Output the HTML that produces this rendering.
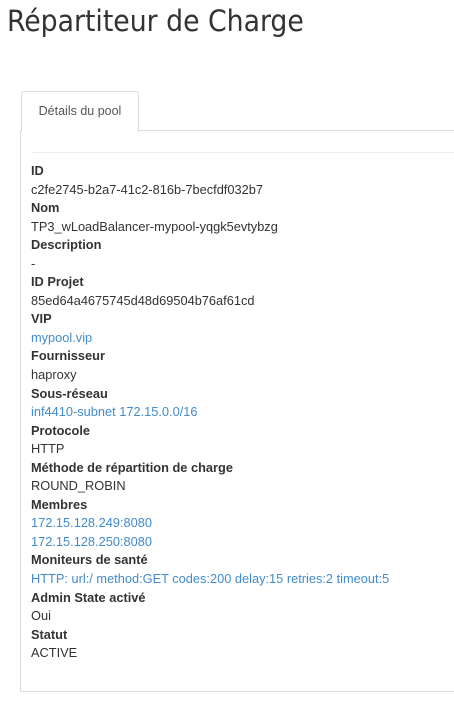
<!DOCTYPE html>
<html><head><meta charset="utf-8"><style>
body{margin:0;background:#fff;font-family:"Liberation Sans",sans-serif;font-size:12.8px;color:#333;width:454px;height:711px;overflow:hidden;position:relative}
h1{position:absolute;left:7px;top:4px;margin:0;font-weight:normal;font-size:29.7px;font-family:"DejaVu Sans Condensed","DejaVu Sans",sans-serif;color:#333}
.tab{position:absolute;left:21px;top:91px;width:116px;height:40px;border:1px solid #ddd;border-bottom:none;border-radius:3px 3px 0 0;background:#fff;text-align:center;line-height:38px;color:#555;z-index:2;font-size:12.5px}
.tabline{position:absolute;left:137px;top:130px;right:0;border-top:1px solid #ddd}
.panel{position:absolute;left:20px;top:130px;width:440px;height:561px;border-left:1px solid #ddd;border-bottom:1px solid #ddd}
.hr{position:absolute;left:31px;top:152px;right:0;border-top:1px solid #eee}
dl{position:absolute;left:31px;top:162px;margin:0;line-height:18.54px}
dt{font-weight:bold}dd{margin:0}
a{color:#428bca;text-decoration:none}
</style></head><body>
<h1>Répartiteur de Charge</h1>
<div class="panel"></div>
<div class="tabline"></div>
<div class="tab">Détails du pool</div>
<div class="hr"></div>
<dl>
<dt>ID</dt><dd>c2fe2745-b2a7-41c2-816b-7becfdf032b7</dd>
<dt>Nom</dt><dd>TP3_wLoadBalancer-mypool-yqgk5evtybzg</dd>
<dt>Description</dt><dd>-</dd>
<dt>ID Projet</dt><dd>85ed64a4675745d48d69504b76af61cd</dd>
<dt>VIP</dt><dd><a>mypool.vip</a></dd>
<dt>Fournisseur</dt><dd>haproxy</dd>
<dt>Sous-réseau</dt><dd><a>inf4410-subnet 172.15.0.0/16</a></dd>
<dt>Protocole</dt><dd>HTTP</dd>
<dt>Méthode de répartition de charge</dt><dd>ROUND_ROBIN</dd>
<dt>Membres</dt><dd><a>172.15.128.249:8080</a><br><a>172.15.128.250:8080</a></dd>
<dt>Moniteurs de santé</dt><dd><a>HTTP: url:/ method:GET codes:200 delay:15 retries:2 timeout:5</a></dd>
<dt>Admin State activé</dt><dd>Oui</dd>
<dt>Statut</dt><dd>ACTIVE</dd>
</dl>
</body></html>
